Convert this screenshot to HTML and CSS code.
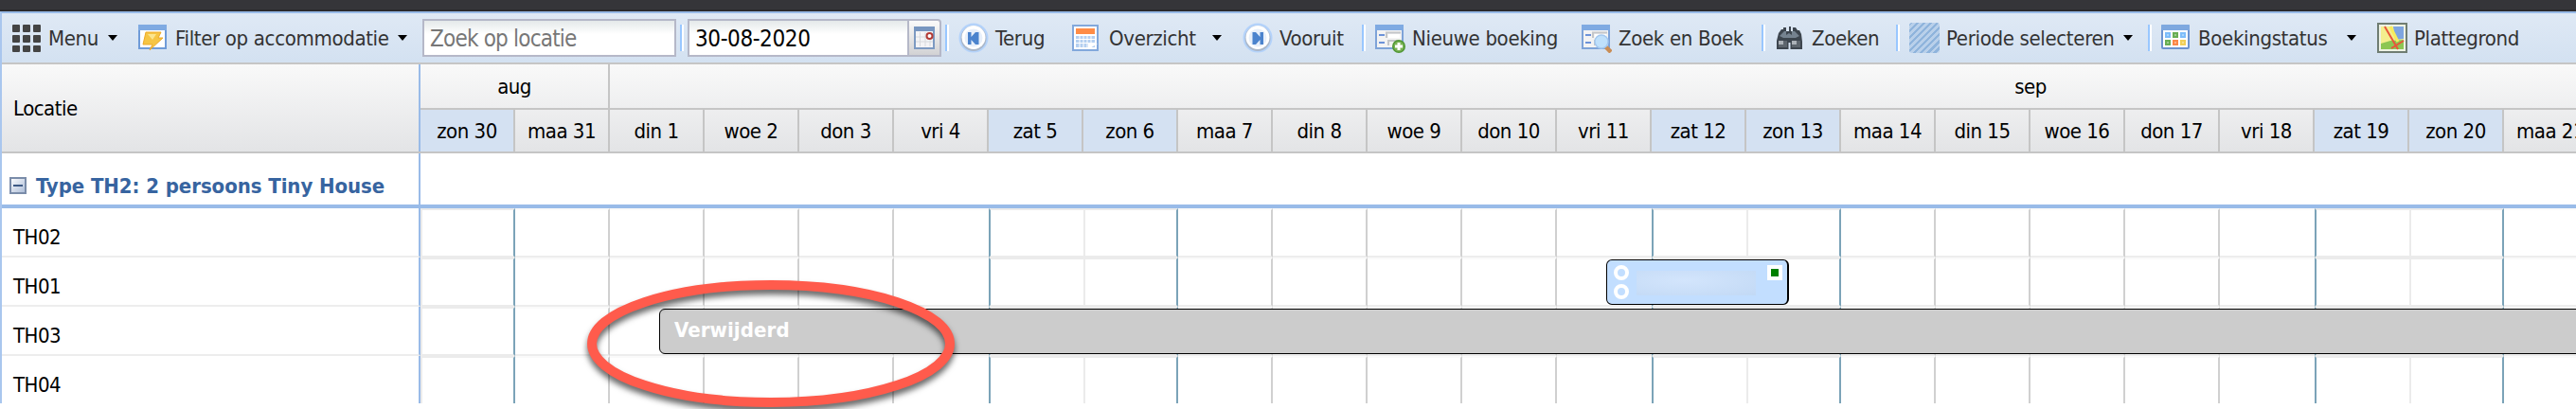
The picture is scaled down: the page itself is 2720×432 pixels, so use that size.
FILE: index.html
```html
<!DOCTYPE html>
<html lang="nl">
<head>
    <meta charset="UTF-8">
    <meta name="viewport" content="width=device-width, initial-scale=1.0">
    <title>Planbord</title>
    <link rel="stylesheet" href="styles.css">
</head>
<body>
    <div class="topbar"></div>
    <div class="panel">
        <div class="toolbar">
            <div class="btn btn-wide">
                <svg class="icon" viewBox="0 0 32 32"><g fill="#444"><rect x="1" y="2" width="8" height="8" rx="1"/><rect x="12" y="2" width="8" height="8" rx="1"/><rect x="23" y="2" width="8" height="8" rx="1"/><rect x="1" y="13" width="8" height="8" rx="1"/><rect x="12" y="13" width="8" height="8" rx="1"/><rect x="23" y="13" width="8" height="8" rx="1"/><rect x="1" y="24" width="8" height="7" rx="1"/><rect x="12" y="24" width="8" height="7" rx="1"/><rect x="23" y="24" width="8" height="7" rx="1"/></g></svg>
                <span class="label">Menu</span>
                <i class="arrow"></i>
            </div>
            <div class="btn">
                <svg class="icon" viewBox="0 0 32 32"><rect x="1" y="3" width="28" height="24" fill="#fff" stroke="#6f9bd8" stroke-width="2"/><rect x="0" y="2" width="30" height="6" fill="#7faae2"/><path d="M8 10h16l-3 6h5L12 29l3-6H5z" fill="#f6c544" stroke="#eda928"/><path d="M10 12h9l-4 6z" fill="#fbe58f"/></svg>
                <span class="label">Filter op accommodatie</span>
                <i class="arrow"></i>
            </div>
            <input class="field" type="text" placeholder="Zoek op locatie">
            <div class="sep"></div>
            <div class="date">
                <input class="field date-field" type="text" value="30-08-2020">
                <span class="trigger">
                    <svg class="trigger-icon" viewBox="0 0 24 26"><rect x="2" y="2" width="20" height="22" fill="#f4f4f6" stroke="#7d9ac2" stroke-width="2"/><rect x="1" y="1" width="22" height="5" fill="#7896c0"/><path d="M7.500 7v15M13 7v15M18 7v15M3 12h18M3 17h18" stroke="#d8dade"/><circle cx="17.500" cy="11" r="3" fill="#fff" stroke="#b33a35" stroke-width="2"/></svg>
                </span>
            </div>
            <div class="sep"></div>
            <div class="btn">
                <svg class="icon" viewBox="0 0 32 32"><circle cx="16" cy="16" r="15.500" fill="#b3d2fa"/><circle cx="16" cy="16.500" r="13.500" fill="#aab7c9"/><circle cx="16" cy="15.500" r="12.500" fill="#fff"/><circle cx="16" cy="16" r="9.500" fill="#e7effa"/><path d="M10 10h3.500v5L18 10h3.500v13H18l-4.500-5v5H10z" fill="#4b83cd"/></svg>
                <span class="label">Terug</span>
            </div>
            <div class="btn btn-wide">
                <svg class="icon" viewBox="0 0 32 32"><rect x="1" y="3" width="26" height="26" fill="#fff" stroke="#82a8dc" stroke-width="2"/><rect x="4" y="6" width="20" height="6" fill="#ff8c46"/><rect x="4" y="14" width="20" height="12" fill="#b4cff0"/><path d="M8 13v13M12 13v13M16 13v13M20 13v13M4 17.500h20M4 21.500h20" stroke="#fff"/><path d="M17 28V22h10z" fill="#fff"/></svg>
                <span class="label">Overzicht</span>
                <i class="arrow"></i>
            </div>
            <div class="btn">
                <svg class="icon" viewBox="0 0 32 32"><circle cx="16" cy="16" r="15.500" fill="#b3d2fa"/><circle cx="16" cy="16.500" r="13.500" fill="#aab7c9"/><circle cx="16" cy="15.500" r="12.500" fill="#fff"/><circle cx="16" cy="16" r="9.500" fill="#e7effa"/><path d="M22 10h-3.500v5L14 10h-3.500v13H14l4.500-5v5H22z" fill="#4b83cd"/></svg>
                <span class="label">Vooruit</span>
            </div>
            <div class="sep"></div>
            <div class="btn">
                <svg class="icon" viewBox="0 0 32 32"><rect x="1" y="3" width="28" height="24" fill="#f3f3f3" stroke="#7ea3d8" stroke-width="2"/><rect x="0" y="2" width="30" height="6" fill="#7faae2"/><path d="M4 13h6M4 21h6" stroke="#6c92d8" stroke-width="2"/><path d="M12 16V10.500h15M14 24v-5h11" fill="none" stroke="#c4c6c9" stroke-width="2"/><rect x="14" y="12" width="12" height="4" fill="#fff"/><circle cx="25" cy="25" r="7" fill="#4f9634"/><circle cx="25" cy="25" r="5.500" fill="#79b353"/><path d="M25 21v8M21 25h8" stroke="#fff" stroke-width="3"/></svg>
                <span class="label">Nieuwe boeking</span>
            </div>
            <div class="btn">
                <svg class="icon" viewBox="0 0 32 32"><rect x="1" y="3" width="28" height="24" fill="#f3f3f3" stroke="#7ea3d8" stroke-width="2"/><rect x="0" y="2" width="30" height="6" fill="#7faae2"/><path d="M4 13h6M4 21h6" stroke="#6c92d8" stroke-width="2"/><path d="M12 16V10.500h15M14 24v-5h11" fill="none" stroke="#c4c6c9" stroke-width="2"/><rect x="14" y="12" width="12" height="4" fill="#fff"/><path d="M25 25l6 6" stroke="#c98d55" stroke-width="4.500"/><circle cx="21" cy="20" r="7" fill="#bfe0fb" stroke="#a3c8ef" stroke-width="1.500"/></svg>
                <span class="label">Zoek en Boek</span>
            </div>
            <div class="sep"></div>
            <div class="btn">
                <svg class="icon" viewBox="0 0 32 32"><path d="M4 11l3-4h2V5h3v4h3V4h2v5h2V5h3l2 3h2l2 4 1 8v8H16.500v-7h-2v7H2v-9z" fill="#3d454e"/><path d="M5 14l5-5h2v4l3-2 3 2V9h3l5 5-4 2H9z" fill="#75828f"/><path d="M4 19h9v7H4zM18 19h9v7h-9z" fill="#5d656d"/><path d="M4 19h5v4H4zM18 19h5v4h-5z" fill="#abb1b7"/></svg>
                <span class="label">Zoeken</span>
            </div>
            <div class="sep"></div>
            <div class="btn">
                <span class="icon stripes"></span>
                <span class="label">Periode selecteren</span>
                <i class="arrow"></i>
            </div>
            <div class="sep"></div>
            <div class="btn btn-wide">
                <svg class="icon" viewBox="0 0 32 32"><rect x="1" y="3" width="28" height="24" rx="1" fill="#fff" stroke="#6c93cf" stroke-width="2"/><rect x="0" y="2" width="30" height="6" rx="1" fill="#7ea8df"/><path d="M4 10h6v6H4zM20 10h6v6h-6z" fill="#7dbdfa"/><path d="M12 10h6v6h-6zM4 18h6v6H4z" fill="#68ae53"/><path d="M12 18h6v6h-6z" fill="#fb8748"/><path d="M20 18h6v6h-6z" fill="#f1cf57"/><path d="M6 12h2v2H6zM14 12h2v2h-2zM22 12h2v2h-2zM6 20h2v2H6zM14 20h2v2h-2zM22 20h2v2h-2z" fill="#fff" opacity=".35"/></svg>
                <span class="label">Boekingstatus</span>
                <i class="arrow"></i>
            </div>
            <div class="btn">
                <svg class="icon" viewBox="0 0 32 32"><rect x="1" y="1" width="30" height="30" fill="#eef3e4" stroke="#6f7d72" stroke-width="2"/><path d="M4 4h24v24H4z" fill="#f4ee8e"/><path d="M17 4h11v13l-9 1z" fill="#7ea5e0"/><path d="M4 22l10-3 14-1v10H4z" fill="#8cc653"/><path d="M14 4l8 16" stroke="#f7ec5c" stroke-width="3"/><path d="M8 4l14 24M15 27l13-8" stroke="#e8553a" stroke-width="2"/></svg>
                <span class="label">Plattegrond</span>
            </div>
        </div>

        <div class="header">
            <div class="head-loc">Locatie</div>
            <div class="head-time">
                <div class="months">
                    <div class="month month-aug">aug</div>
                    <div class="month month-sep">sep</div>
                </div>
                <div class="days"></div>
            </div>
        </div>

        <div class="group">
            <div class="group-name">
                <svg class="collapse" viewBox="0 0 18 18"><defs><linearGradient id="box" x2="1" y2="1"><stop offset="0" stop-color="#fff"/><stop offset="1" stop-color="#a9bad6"/></linearGradient></defs><rect x="1" y="1" width="16" height="16" fill="url(#box)" stroke="#7a8ca9" stroke-width="2"/><path d="M4 9h10" stroke="#3e5a85" stroke-width="2"/></svg>
                <span>Type TH2: 2 persoons Tiny House</span>
            </div>
        </div>

        <div class="rows">
            <div class="row"><div class="loc">TH02</div><div class="cells"></div></div>
            <div class="row"><div class="loc">TH01</div><div class="cells"></div></div>
            <div class="row"><div class="loc">TH03</div><div class="cells"></div></div>
            <div class="row"><div class="loc">TH04</div><div class="cells"></div></div>
            <div class="event booking">
                <div class="dots"><i class="dot"></i><i class="dot"></i></div>
                <div class="guest"></div>
                <i class="status"></i>
            </div>
            <div class="event removed">Verwijderd</div>
        </div>
    </div>
    <svg class="marker" viewBox="0 0 420 160"><ellipse cx="204" cy="83" rx="189" ry="62"/></svg>

    <script>
        let names = ["zon", "maa", "din", "woe", "don", "vri", "zat"];
        let days = document.getElementsByClassName("days")[0];
        let cellRows = document.getElementsByClassName("cells");

        for(let i = 0; i < 23; i++) {
            let num = i < 2 ? 30 + i : i - 1;
            let name = names[i % 7];
            let day = document.createElement("div");
            day.className = "day " + name;
            day.innerText = name + " " + num;
            days.appendChild(day);
            for(let j = 0; j < cellRows.length; j++) {
                let cell = document.createElement("div");
                cell.className = "cell " + name;
                cellRows[j].appendChild(cell);
            }
        }
    </script>
</body>
</html>
```
FILE: styles.css
```css
* {
    box-sizing: border-box;
}

body {
    margin: 0;
    width: 2720px;
    height: 432px;
    overflow: hidden;
    position: relative;
    background: #fff;
    font-family: "DejaVu Sans Condensed", "Noto Sans", sans-serif;
    font-size: 22px;
    letter-spacing: -0.5px;
    color: #000;
}

.topbar {
    height: 12px;
    background: #353539;
    border-bottom: 2px solid #2b2b2d;
}

.panel {
    height: 414px;
    border-top: 2px solid #99bbe8;
    border-left: 2px solid #a9c6ee;
    overflow: hidden;
}

/* toolbar */
.toolbar {
    display: grid;
    grid-template-columns: 134px 300px 272px 8px 272px 14px 120px 180px 126px 14px 218px 190px 14px 128px 14px 252px 14px 228px 200px;
    align-items: center;
    height: 54px;
    padding: 0 0 0 10px;
    border-bottom: 2px solid #c5c5c5;
    background: linear-gradient(#dfe9f5, #d3e1f1);
    letter-spacing: -0.33px;
    color: #333;
}

.btn {
    display: flex;
    align-items: center;
    padding-right: 16px;
    white-space: nowrap;
}

.btn-wide {
    padding-right: 22px;
}

.icon {
    width: 32px;
    height: 32px;
    margin-right: 7px;
    flex: none;
}

.stripes {
    border-radius: 3px;
    background: repeating-linear-gradient(135deg, #8fb4dc 0 2.5px, #b9d0ea 2.5px 5px);
}

.arrow {
    margin-left: auto;
    border: 5px solid transparent;
    border-top: 6px solid #000;
    border-bottom: 0;
}

.sep {
    width: 4px;
    height: 28px;
    border-left: 2px solid #99c7ff;
    background: #fff;
}

.field {
    width: 268px;
    height: 40px;
    padding: 2px 6px 0;
    border: 2px solid #b5b8c8;
    background: linear-gradient(#e4e9ea, #fff 14px);
    font: 24px "DejaVu Sans Condensed", "Noto Sans", sans-serif;
    letter-spacing: -0.8px;
    color: #000;
}

.field::placeholder {
    color: #777;
}

.date {
    display: flex;
    width: 268px;
}

.date-field {
    width: 234px;
    letter-spacing: -0.4px;
}

.trigger {
    display: flex;
    align-items: center;
    justify-content: center;
    width: 34px;
    height: 40px;
    border: 2px solid #b5b8c8;
    border-left: 0;
    border-radius: 0 4px 0 0;
    background: linear-gradient(#fafafa, #d2d2d4);
}

.trigger-icon {
    width: 24px;
    height: 26px;
}

/* header */
.header {
    display: flex;
    height: 94px;
    border-bottom: 2px solid #c5c5c5;
    background: linear-gradient(#f9f9f9, #e3e4e6);
}

.head-loc {
    display: flex;
    align-items: center;
    width: 442px;
    padding-left: 12px;
    border-right: 2px solid #99bbe8;
    flex: none;
}

.head-time {
    width: 2276px;
    overflow: hidden;
}

.months,
.days {
    display: flex;
}

.month {
    height: 48px;
    line-height: 47px;
    text-align: center;
    border-bottom: 2px solid #c5c5c5;
    flex: none;
}

.month-aug {
    width: 200px;
    border-right: 2px solid #c5c5c5;
}

.month-sep {
    width: 3000px;
}

.day {
    width: 100px;
    height: 44px;
    line-height: 45px;
    text-align: center;
    white-space: nowrap;
    border-right: 2px solid #c5c5c5;
    flex: none;
}

.day.zat,
.day.zon {
    background: #d4e1f2;
}

/* group row */
.group {
    display: flex;
    height: 58px;
    border-bottom: 4px solid #99bbe8;
}

.group-name {
    display: flex;
    align-items: center;
    width: 442px;
    padding: 14px 0 0 8px;
    border-right: 2px solid #99bbe8;
    font-weight: bold;
    letter-spacing: -0.07px;
    color: #3764a0;
}

.collapse {
    width: 18px;
    height: 18px;
    margin-right: 10px;
}

/* resource rows */
.rows {
    position: relative;
}

.row {
    display: flex;
    height: 52px;
}

.loc {
    width: 442px;
    height: 52px;
    line-height: 62px;
    padding-left: 12px;
    border-right: 2px solid #99bbe8;
    border-bottom: 2px solid #ededed;
    flex: none;
}

.cells {
    display: flex;
    width: 2276px;
    overflow: hidden;
}

.cell {
    width: 100px;
    height: 52px;
    border-top: 2px solid #fafafa;
    border-right: 2px solid #d0d0d0;
    border-bottom: 2px solid #ededed;
    flex: none;
}

.cell.vri {
    border-right: 0;
}

.cell.zat,
.cell.zon {
    border-top-color: #ebebeb;
    border-bottom-color: #ebebeb;
    border-left: 2px solid #ebebeb;
    border-right: 0;
}

.cell.zat {
    border-left-color: #7ba3b8;
}

.cell.zon {
    border-right: 2px solid #7ba3b8;
}

.event {
    position: absolute;
    height: 48px;
    border: 1px solid #000;
    border-radius: 6px;
}

.booking {
    display: flex;
    left: 1694px;
    top: 54px;
    width: 193px;
    padding: 5px 5px 0 7px;
    border-right-width: 2px;
    background: #c2deff;
}

.dots {
    width: 16px;
    margin-right: 8px;
}

.dot {
    display: block;
    width: 16px;
    height: 16px;
    margin-bottom: 4px;
    border: 4px solid #fff;
    border-radius: 50%;
}

.guest {
    width: 126px;
    height: 26px;
    margin: 6px 12px 0 0;
    background: radial-gradient(ellipse at 40% 40%, #d3e5fc, #c2d9f5);
}

.status {
    width: 16px;
    height: 16px;
    border: 4px solid #fff;
    background: #008000;
}

.removed {
    left: 694px;
    top: 106px;
    width: 2100px;
    padding-left: 15px;
    line-height: 43px;
    background: #ccc;
    color: #fff;
    font-weight: bold;
    letter-spacing: 0.1px;
}

/* hand-drawn style ellipse over the planning */
.marker {
    position: absolute;
    left: 610px;
    top: 280px;
    width: 420px;
    height: 160px;
    fill: none;
    stroke: #ff5b4c;
    stroke-width: 10px;
    filter: drop-shadow(0 5px 3px rgba(0, 0, 0, 0.6));
}
```
